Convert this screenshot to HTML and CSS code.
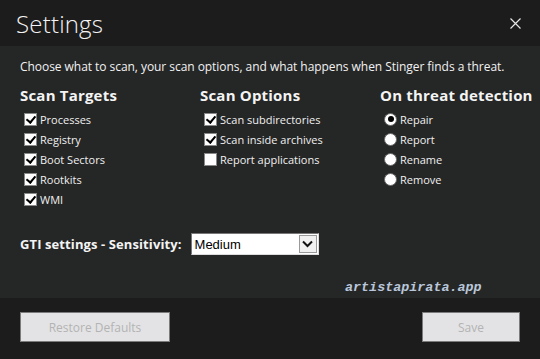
FILE: index.html
```html
<!DOCTYPE html>
<html lang="en">
<head>
    <meta charset="UTF-8">
    <title>Settings</title>
    <link rel="stylesheet" href="styles.css">
</head>
<body>
    <div class="dialog">
        <div class="header">
            <h1>Settings</h1>
            <svg class="close" width="11" height="11" viewBox="0 0 11 11"><path d="M0.5 0.5 L10.5 10.5 M10.5 0.5 L0.5 10.5" stroke="#e6e6e6" stroke-width="1.2"/></svg>
        </div>

        <div class="content">
            <p class="intro">Choose what to scan, your scan options, and what happens when Stinger finds a threat.</p>

            <div class="columns">
                <div class="col">
                    <h2>Scan Targets</h2>
                    <div class="row"><span class="check on"></span>Processes</div>
                    <div class="row"><span class="check on"></span>Registry</div>
                    <div class="row"><span class="check on"></span>Boot Sectors</div>
                    <div class="row"><span class="check on"></span>Rootkits</div>
                    <div class="row"><span class="check on"></span>WMI</div>
                </div>
                <div class="col">
                    <h2>Scan Options</h2>
                    <div class="row"><span class="check on"></span>Scan subdirectories</div>
                    <div class="row"><span class="check on"></span>Scan inside archives</div>
                    <div class="row"><span class="check"></span>Report applications</div>
                </div>
                <div class="col">
                    <h2>On threat detection</h2>
                    <div class="row"><span class="radio on"></span>Repair</div>
                    <div class="row"><span class="radio"></span>Report</div>
                    <div class="row"><span class="radio"></span>Rename</div>
                    <div class="row"><span class="radio"></span>Remove</div>
                </div>
            </div>

            <div class="gti">
                <span class="gti-label">GTI settings - Sensitivity:</span>
                <div class="select">
                    <span class="select-value">Medium</span>
                    <span class="select-btn">
                        <svg width="11" height="8" viewBox="0 0 11 8"><path d="M1 1.5 L5.5 6 L10 1.5" fill="none" stroke="#111" stroke-width="2"/></svg>
                    </span>
                </div>
            </div>

            <div class="watermark">artistapirata.app</div>
        </div>

        <div class="footer">
            <button class="btn restore">Restore Defaults</button>
            <button class="btn save">Save</button>
        </div>
    </div>
</body>
</html>
```

FILE: styles.css
```css
body {
    margin: 0;
    font-family: "Open Sans", Arial, sans-serif;
    background-color: #1c1c1c;
    color: #f2f2f2;
}
.dialog {
    width: 540px;
    height: 359px;
    display: flex;
    flex-direction: column;
}
.header {
    height: 46px;
    flex-shrink: 0;
    background-color: #1c1c1c;
    display: flex;
    align-items: center;
    justify-content: space-between;
    padding: 0 19px 0 16px;
}
h1 {
    margin: 0;
    font-size: 24px;
    font-weight: 300;
    color: #f4f4f4;
    letter-spacing: 0.2px;
}
.close {
    margin-top: 1px;
}
.content {
    flex: 1;
    min-height: 0;
    overflow: hidden;
    background-color: #252626;
    padding: 12px 20px 0 20px;
}
.intro {
    margin: 0;
    font-size: 12px;
    letter-spacing: -0.05px;
    line-height: 18px;
    white-space: nowrap;
    color: #f2f2f2;
}
.columns {
    display: grid;
    grid-template-columns: 180px 180px auto;
    margin-top: 9px;
}
h2 {
    margin: 0 0 4px 0;
    font-size: 15px;
    font-weight: 700;
    line-height: 20px;
    white-space: nowrap;
    color: #f4f4f4;
    letter-spacing: 0.2px;
}
.row {
    display: flex;
    align-items: center;
    height: 20px;
    font-size: 11px;
    color: #f0f0f0;
    padding-left: 4px;
}
.check {
    width: 13px;
    height: 13px;
    background-color: #fff;
    border: 1px solid #888;
    box-sizing: border-box;
    margin-right: 3px;
    position: relative;
}
.check.on::after {
    content: "";
    position: absolute;
    left: 3px;
    top: 0px;
    width: 4px;
    height: 7px;
    border: solid #000;
    border-width: 0 2px 2px 0;
    transform: rotate(40deg);
}
.radio {
    width: 13px;
    height: 13px;
    border-radius: 50%;
    background-color: #fff;
    border: 1px solid #666;
    box-sizing: border-box;
    margin-right: 3px;
    position: relative;
}
.radio.on::after {
    content: "";
    position: absolute;
    left: 2.5px;
    top: 2.5px;
    width: 6px;
    height: 6px;
    border-radius: 50%;
    background-color: #000;
}
.gti {
    display: flex;
    align-items: center;
    margin-top: 24px;
    height: 22px;
}
.gti-label {
    font-size: 13px;
    font-weight: 700;
    letter-spacing: 0.1px;
    color: #f4f4f4;
    margin-right: 9px;
}
.select {
    width: 128px;
    height: 22px;
    box-sizing: border-box;
    background-color: #fff;
    border: 1px solid #777;
    border-right-color: #ddd;
    border-bottom-color: #ddd;
    display: flex;
    align-items: center;
    justify-content: space-between;
}
.select-value {
    font-family: "Liberation Sans", Arial, sans-serif;
    font-size: 13px;
    color: #000;
    padding-left: 3px;
}
.select-btn {
    width: 18px;
    height: 18px;
    margin-right: 1px;
    background-color: #f0f0f0;
    border: 1px solid #999;
    box-sizing: border-box;
    display: flex;
    align-items: center;
    justify-content: center;
}
.watermark {
    margin: 24px 0 0 325px;
    font-family: "Liberation Mono", monospace;
    font-weight: 700;
    font-style: italic;
    font-size: 13.4px;
    line-height: 18px;
    color: #b9c6d9;
}
.footer {
    height: 61px;
    flex-shrink: 0;
    background-color: #1c1c1c;
    display: flex;
    justify-content: space-between;
    align-items: flex-start;
    padding: 14px 20px 0 20px;
    box-sizing: border-box;
}
.btn {
    height: 30px;
    background-color: #e3e3e5;
    border: 1px solid #7b7b7b;
    color: #b3b3b3;
    font-family: "Open Sans", Arial, sans-serif;
    font-size: 12px;
    padding: 0;
}
.restore {
    width: 150px;
}
.save {
    width: 98px;
}
```
